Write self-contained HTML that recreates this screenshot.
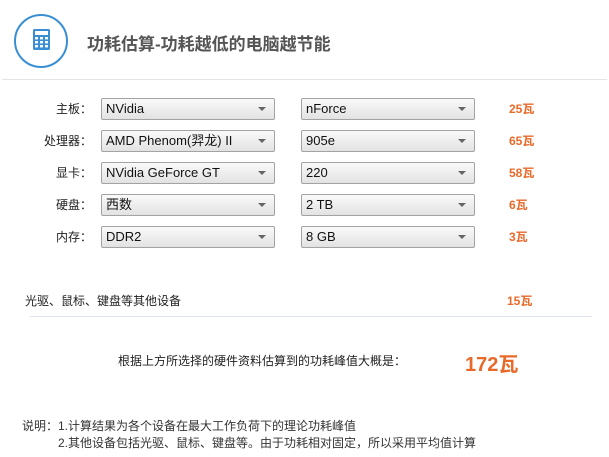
<!DOCTYPE html>
<html><head><meta charset="utf-8"><style>
body{margin:0;width:609px;height:457px;background:#fff;font-family:"Liberation Sans","Noto Sans CJK SC",sans-serif;position:relative;overflow:hidden;color:#222}
.a{position:absolute;white-space:nowrap}
.sel{position:absolute;height:20px;border:1px solid #a3a3a3;border-radius:2px;background:linear-gradient(#fafafa,#e2e2e2);font-size:13px;line-height:20px;padding-left:4px;box-sizing:content-box;color:#111}
.sel:after{content:"";position:absolute;right:8px;top:8px;border-left:4px solid transparent;border-right:4px solid transparent;border-top:4px solid #666}
.lab{position:absolute;width:92px;text-align:right;font-size:12px;line-height:22px;left:0;font-family:"Noto Sans CJK SC",sans-serif}
.w{position:absolute;left:509px;font-size:12px;font-weight:bold;color:#e86a2a;line-height:22px}
</style></head><body>
<svg class="a" style="left:0;top:0" width="90" height="80">
<circle cx="41" cy="41" r="26" fill="none" stroke="#3a8fd4" stroke-width="2"/>
<rect x="33" y="29" width="17" height="21" rx="1.5" fill="#3a8fd4"/>
<rect x="35" y="31" width="13" height="4" fill="#fff"/>
<g fill="#fff">
<rect x="35" y="37" width="3" height="2.4"/><rect x="40" y="37" width="3" height="2.4"/><rect x="45" y="37" width="3" height="2.4"/>
<rect x="35" y="41" width="3" height="2.4"/><rect x="40" y="41" width="3" height="2.4"/><rect x="45" y="41" width="3" height="2.4"/>
<rect x="35" y="45" width="3" height="2.4"/><rect x="40" y="45" width="3" height="2.4"/><rect x="45" y="45" width="3" height="2.4"/>
</g></svg>
<div class="a" style="left:87px;top:30px;font-size:17px;font-weight:bold;color:#555">功耗估算-功耗越低的电脑越节能</div>
<div class="a" style="left:2px;top:79px;width:605px;height:1px;background:#e4e4e4"></div>

<div class="lab" style="top:98px">主板：</div>
<div class="sel" style="left:101px;top:98px;width:168px">NVidia</div>
<div class="sel" style="left:301px;top:98px;width:168px">nForce</div>
<div class="w" style="top:98px">25瓦</div>

<div class="lab" style="top:130px">处理器：</div>
<div class="sel" style="left:101px;top:130px;width:168px">AMD Phenom(羿龙) II</div>
<div class="sel" style="left:301px;top:130px;width:168px">905e</div>
<div class="w" style="top:130px">65瓦</div>

<div class="lab" style="top:162px">显卡：</div>
<div class="sel" style="left:101px;top:162px;width:168px">NVidia GeForce GT</div>
<div class="sel" style="left:301px;top:162px;width:168px">220</div>
<div class="w" style="top:162px">58瓦</div>

<div class="lab" style="top:194px">硬盘：</div>
<div class="sel" style="left:101px;top:194px;width:168px">西数</div>
<div class="sel" style="left:301px;top:194px;width:168px">2 TB</div>
<div class="w" style="top:194px">6瓦</div>

<div class="lab" style="top:226px">内存：</div>
<div class="sel" style="left:101px;top:226px;width:168px">DDR2</div>
<div class="sel" style="left:301px;top:226px;width:168px">8 GB</div>
<div class="w" style="top:226px">3瓦</div>

<div class="a" style="left:25px;top:292px;font-size:12px;line-height:18px">光驱、鼠标、键盘等其他设备</div>
<div class="w" style="top:290px;left:507px">15瓦</div>
<div class="a" style="left:30px;top:316px;width:562px;height:1px;background:#dde4ec"></div>

<div class="a" style="left:118px;top:352px;font-size:12px;line-height:18px">根据上方所选择的硬件资料估算到的功耗峰值大概是：</div>
<div class="a" style="left:465px;top:352px;font-size:20px;font-weight:bold;color:#e86a2a;line-height:26px">172瓦</div>

<div class="a" style="left:22px;top:417px;font-size:12px;line-height:18px;color:#333">说明：1.计算结果为各个设备在最大工作负荷下的理论功耗峰值</div>
<div class="a" style="left:58px;top:434px;font-size:12px;line-height:18px;color:#333">2.其他设备包括光驱、鼠标、键盘等。由于功耗相对固定，所以采用平均值计算</div>
</body></html>
